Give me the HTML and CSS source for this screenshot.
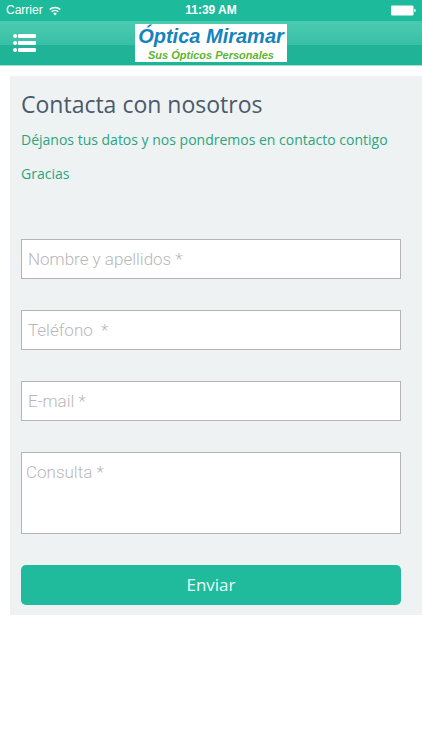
FILE: index.html
```html
<!DOCTYPE html>
<html lang="es">
<head>
<meta charset="utf-8">
<meta name="viewport" content="width=device-width, initial-scale=1">
<title>Óptica Miramar</title>
<link rel="stylesheet" href="styles.css">
</head>
<body>
<div class="status">
  <div class="carrier">
    <span>Carrier</span>
    <svg width="12" height="10" viewBox="0 0 12 10" aria-hidden="true">
      <g fill="none" stroke="currentColor" stroke-width="1.5">
        <path d="M.7 3.6a7.6 7.6 0 0 1 10.6 0"/>
        <path d="M2.7 5.8a4.7 4.7 0 0 1 6.6 0"/>
      </g>
      <path d="M6 9.4 4.2 7.4a2.6 2.6 0 0 1 3.6 0z" fill="currentColor"/>
    </svg>
  </div>
  <div class="clock">11:39 AM</div>
  <svg class="battery" width="25" height="11" viewBox="0 0 25 11" aria-hidden="true">
    <rect x="0" y=".5" width="22.5" height="10" rx="1.2" fill="currentColor"/>
    <path d="M23.3 3.8q1.5.3 1.5 1.7t-1.5 1.7z" fill="currentColor"/>
  </svg>
</div>
<header class="bar">
  <button class="menu" type="button" aria-label="Menú">
    <svg width="24" height="18" viewBox="0 0 24 18" aria-hidden="true">
      <g fill="currentColor">
        <circle cx="2.1" cy="2" r="2"/><rect x="5" y="0" width="18" height="4" rx="1"/>
        <circle cx="2.1" cy="9" r="2"/><rect x="5" y="7" width="18" height="4" rx="1"/>
        <circle cx="2.1" cy="16" r="2"/><rect x="5" y="14" width="18" height="4" rx="1"/>
      </g>
    </svg>
  </button>
  <div class="logo">
    <div class="logo-name">Óptica Miramar</div>
    <div class="logo-tag">Sus Ópticos Personales</div>
  </div>
</header>
<main class="card">
  <h1>Contacta con nosotros</h1>
  <p>Déjanos tus datos y nos pondremos en contacto contigo</p>
  <p>Gracias</p>
  <form class="form">
    <input class="field" type="text" aria-label="Nombre y apellidos" placeholder="Nombre y apellidos *">
    <input class="field" type="tel" aria-label="Teléfono" placeholder="Teléfono&nbsp; *">
    <input class="field" type="email" aria-label="E-mail" placeholder="E-mail *">
    <textarea class="field message" aria-label="Consulta" placeholder="Consulta *"></textarea>
    <button class="send" type="submit">Enviar</button>
  </form>
</main>
</body>
</html>
```
FILE: styles.css
```css
* { box-sizing: border-box; }
body {
  margin: 0;
  background: #fff;
  font-family: "Open Sans", sans-serif;
}
.status {
  display: grid;
  grid-template-columns: 1fr auto 1fr;
  align-items: center;
  height: 21px;
  padding: 0 6px;
  background: #1dba9b;
  color: #fff;
  font: 12px/21px "Liberation Sans", sans-serif;
}
.carrier { display: flex; align-items: center; gap: 6px; }
.clock { font-weight: bold; }
.battery { justify-self: end; }
.bar {
  display: grid;
  grid-template-columns: 1fr auto 1fr;
  align-items: center;
  height: 45px;
  padding: 0 13px;
  border-bottom: 1px solid #a5e3d7;
  background: linear-gradient(#4ccbb1 0, #37bfa5 24px, #22b397 24px, #1eb597 100%);
}
.menu {
  display: flex;
  justify-self: start;
  padding: 0;
  border: 0;
  background: none;
  color: #fff;
}
.logo {
  width: 152px;
  height: 38px;
  background: #fff;
  text-align: center;
  white-space: nowrap;
  font-family: "Liberation Sans", sans-serif;
  font-weight: bold;
  font-style: italic;
}
.logo-name { color: #1583bd; font-size: 20px; line-height: 25px; }
.logo-tag { color: #5cb531; font-size: 11px; line-height: 13px; }
.card {
  margin: 10px 0 0 10px;
  padding: 10px 21px 10px 11px;
  background: #eef2f3;
}
h1 {
  margin: 0 0 8px;
  color: #4a5a6c;
  font-size: 23px;
  line-height: 36px;
  font-weight: 400;
}
p {
  margin: 0 0 14px;
  color: #2aa580;
  font-size: 14px;
  line-height: 20px;
}
.form {
  display: flex;
  flex-direction: column;
  gap: 31px;
  padding-top: 41px;
}
.field {
  display: block;
  width: 100%;
  height: 40px;
  margin: 0;
  padding: 0 6px;
  border: 1px solid #b4b4b4;
  border-radius: 0;
  background: #fff;
  color: #555;
  font: 300 17px/20px Roboto, sans-serif;
}
.field::placeholder { color: #b8b8ba; opacity: 1; }
.message { height: 82px; padding: 9px 4px; resize: none; }
.send {
  height: 40px;
  padding: 0;
  border: 0;
  border-radius: 5px;
  background: #1fbb9c;
  color: #e9fffa;
  font: 17px/40px "Open Sans", sans-serif;
}
```
